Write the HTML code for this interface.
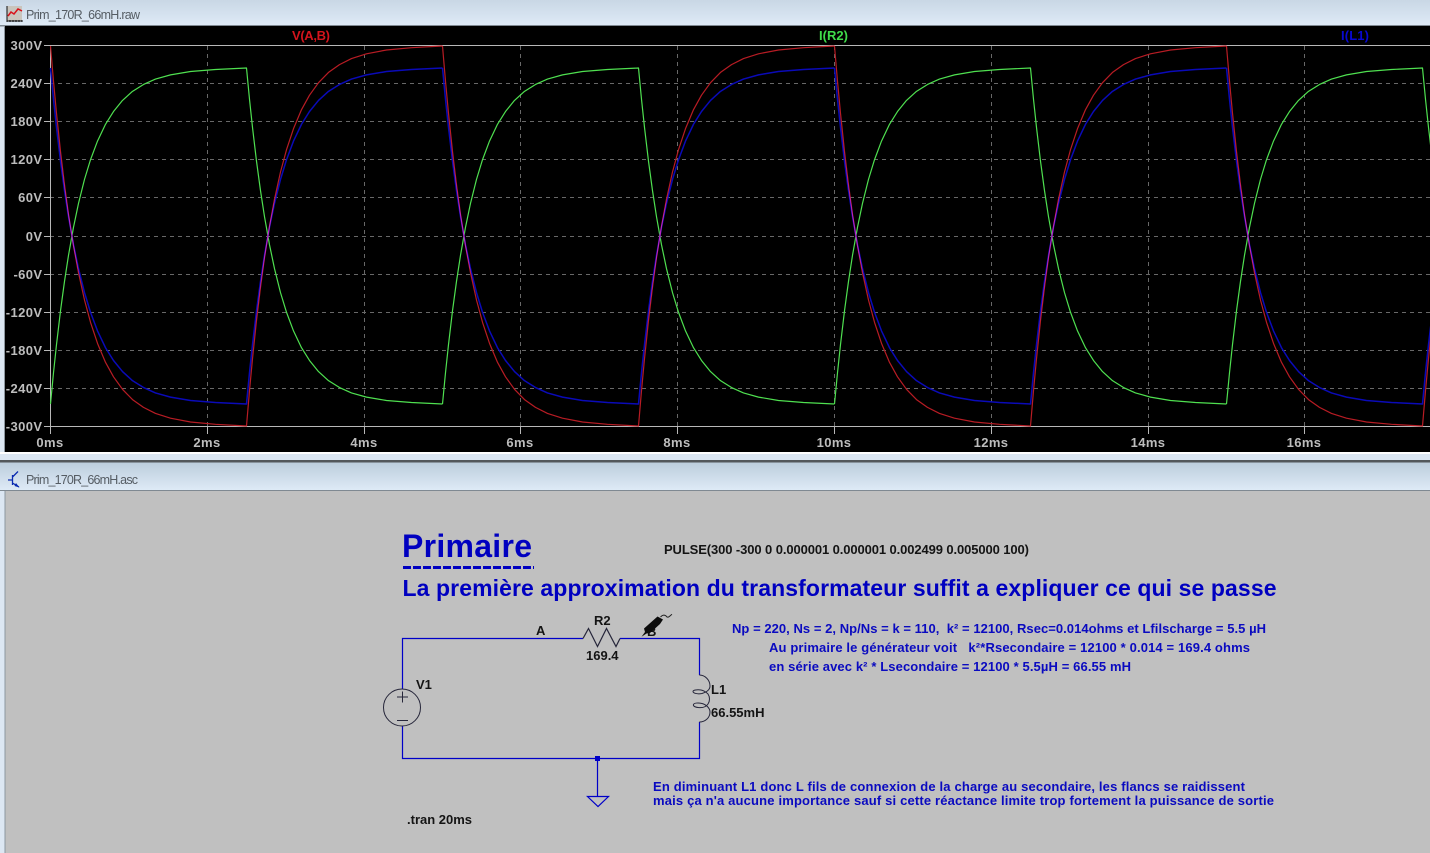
<!DOCTYPE html>
<html><head><meta charset="utf-8"><title>Prim_170R_66mH</title>
<style>
html,body{margin:0;padding:0;width:1430px;height:853px;overflow:hidden;background:#dce7f3}
svg{display:block}
text{font-family:"Liberation Sans",sans-serif;white-space:pre}
.ax{font-size:13px;font-weight:bold;fill:#bdbdbd;letter-spacing:.4px}
.b{font-size:13px;font-weight:bold;fill:#0a0ac0}
.k{font-size:13px;font-weight:bold;fill:#141414}
</style></head><body>
<svg width="1430" height="853" viewBox="0 0 1430 853" xmlns="http://www.w3.org/2000/svg">
<defs>
<linearGradient id="t1" x1="0" y1="0" x2="0" y2="1"><stop offset="0" stop-color="#c9d7e5"/><stop offset="1" stop-color="#deeaf6"/></linearGradient>
<linearGradient id="t2" x1="0" y1="0" x2="0" y2="1"><stop offset="0" stop-color="#bccddd"/><stop offset="1" stop-color="#deeaf6"/></linearGradient>
<polyline id="p" fill="none" vector-effect="non-scaling-stroke" points="0,1 3,.814 6,.646 10,.445 14,.27 18,.115 23,-.052 28,-.194 34,-.337 40,-.454 47,-.565 55,-.665 63,-.741 72,-.807 82,-.861 93,-.902 105,-.934 120,-.959 140,-.979 165,-.991 196,-1 199,-.814 202,-.646 206,-.445 210,-.27 214,-.115 219,.052 224,.194 230,.337 236,.454 243,.565 251,.665 259,.741 268,.807 278,.861 289,.902 301,.934 316,.959 336,.979 361,.991 392,1"/>
<g id="w"><use href="#p"/><use href="#p" x="392"/><use href="#p" x="784"/><use href="#p" x="1176"/></g>
<clipPath id="c"><rect x="5" y="26" width="1425" height="426"/></clipPath>
</defs>

<!-- window chrome -->
<rect width="1430" height="853" fill="#dce7f3"/>
<rect width="1430" height="25" fill="url(#t1)"/>
<rect x="0" y="25" width="1430" height="1.5" fill="#7f8992"/>
<rect x="4" y="26" width="1" height="426" fill="#8d97a0"/>
<rect x="5" y="26" width="1425" height="426" fill="#000"/>
<rect x="0" y="452" width="1430" height="2" fill="#fff"/>
<rect x="0" y="460" width="1430" height="2.500" fill="#53575c"/>
<rect x="0" y="462.500" width="1430" height="27.500" fill="url(#t2)"/>
<rect x="0" y="490" width="1430" height="1.500" fill="#7f8992"/>
<rect x="0" y="491" width="5" height="362" fill="#dce7f3"/>
<rect x="5" y="491" width="1425" height="362" fill="#c0c0c0"/>
<rect x="4.500" y="491" width="1" height="362" fill="#8d97a0"/>

<!-- title icons -->
<rect x="7" y="6" width="15" height="15" fill="#c9c5bd"/>
<path d="M7 6V21H22M7 20v2M10 20v2M13 20v2M16 20v2M19 20v2M22 20v2" fill="none" stroke="#111" stroke-width="1"/>
<path d="M8 16L11 12L14 14L18 9L22 11" fill="none" stroke="#d8131b" stroke-width="1.500"/>
<text x="26" y="19" font-size="12.500" fill="#555c63" textLength="114">Prim_170R_66mH.raw</text>
<path d="M12.500 475V485M8 480H12.500M12.500 477L18 471.500M12.500 483L19 487" fill="none" stroke="#0a2ab0" stroke-width="1.300"/>
<path d="M16 483L19.500 487.500L14.500 486Z" fill="#0a2ab0"/>
<text x="26" y="484" font-size="12.500" fill="#555c63" textLength="112">Prim_170R_66mH.asc</text>

<!-- plot grid -->
<g stroke="#686868" stroke-width="1" stroke-dasharray="4 4" fill="none">
<path d="M50 83.500H1430M50 121.500H1430M50 159.500H1430M50 197.500H1430M50 236.500H1430M50 274.500H1430M50 312.500H1430M50 350.500H1430M50 388.500H1430"/>
<path d="M207.500 46V426M364.500 46V426M520.500 46V426M677.500 46V426M834.500 46V426M991.500 46V426M1148.500 46V426M1304.500 46V426"/>
</g>
<g stroke="#b8b8b8" stroke-width="1" fill="none">
<path d="M50 45.500H1430M50 426.500H1430M50.500 45V434"/>
<path d="M44 45.500h6M44 83.500h6M44 121.500h6M44 159.500h6M44 197.500h6M44 236.500h6M44 274.500h6M44 312.500h6M44 350.500h6M44 388.500h6M44 426.500h6"/>
<path d="M207.500 426v8M364.500 426v8M520.500 426v8M677.500 426v8M834.500 426v8M991.500 426v8M1148.500 426v8M1304.500 426v8"/>
</g>

<!-- traces -->
<g clip-path="url(#c)" stroke-linejoin="round" fill="none">
<g transform="translate(50.500 236) scale(1 168)" stroke="#4fe050" stroke-width="1.200"><use href="#w"/></g>
<g transform="translate(50.500 236) scale(1 -168)" stroke="#0a0ab8" stroke-width="1.500"><use href="#w"/></g>
<g transform="translate(50.500 236) scale(1 -190)" stroke="#b81c24" stroke-width="1.200" style="mix-blend-mode:screen"><use href="#w"/></g>
</g>

<!-- plot labels -->
<text x="292" y="40" font-size="13" font-weight="bold" fill="#d4141c" textLength="38">V(A,B)</text>
<text x="819" y="40" font-size="13" font-weight="bold" fill="#3fdc4a" textLength="29">I(R2)</text>
<text x="1341" y="40" font-size="13" font-weight="bold" fill="#0808d0" textLength="28">I(L1)</text>
<g text-anchor="end">
<text class="ax" x="42.500" y="50">300V</text><text class="ax" x="42.500" y="88">240V</text><text class="ax" x="42.500" y="126">180V</text>
<text class="ax" x="42.500" y="164">120V</text><text class="ax" x="42.500" y="202">60V</text><text class="ax" x="42.500" y="241">0V</text>
<text class="ax" x="42.500" y="279">-60V</text><text class="ax" x="42.500" y="317">-120V</text><text class="ax" x="42.500" y="355">-180V</text>
<text class="ax" x="42.500" y="393">-240V</text><text class="ax" x="42.500" y="431">-300V</text>
</g>
<g text-anchor="middle">
<text class="ax" x="50" y="447">0ms</text><text class="ax" x="207" y="447">2ms</text><text class="ax" x="364" y="447">4ms</text>
<text class="ax" x="520" y="447">6ms</text><text class="ax" x="677" y="447">8ms</text><text class="ax" x="834" y="447">10ms</text>
<text class="ax" x="991" y="447">12ms</text><text class="ax" x="1148" y="447">14ms</text><text class="ax" x="1304" y="447">16ms</text>
</g>

<!-- schematic text -->
<text x="402" y="557" font-size="32" font-weight="bold" fill="#0000c0" textLength="130">Primaire</text>
<path d="M403 567.500H534" stroke="#0000c0" stroke-width="3" stroke-dasharray="8 2"/>
<text x="402.500" y="596" font-size="23" font-weight="bold" fill="#0000c0" textLength="874">La première approximation du transformateur suffit a expliquer ce qui se passe</text>
<text class="k" x="664" y="554" textLength="365">PULSE(300 -300 0 0.000001 0.000001 0.002499 0.005000 100)</text>
<text class="b" x="732" y="633" textLength="534">Np = 220, Ns = 2, Np/Ns = k = 110,  k² = 12100, Rsec=0.014ohms et Lfilscharge = 5.5 µH</text>
<text class="b" x="769" y="652" textLength="481">Au primaire le générateur voit   k²*Rsecondaire = 12100 * 0.014 = 169.4 ohms</text>
<text class="b" x="769" y="671" textLength="362">en série avec k² * Lsecondaire = 12100 * 5.5µH = 66.55 mH</text>
<text class="b" x="653" y="791" textLength="592">En diminuant L1 donc L fils de connexion de la charge au secondaire, les flancs se raidissent</text>
<text class="b" x="653" y="805" textLength="621">mais ça n'a aucune importance sauf si cette réactance limite trop fortement la puissance de sortie</text>
<text class="k" x="536" y="635">A</text>
<text class="k" x="594" y="625">R2</text>
<text class="k" x="586" y="660">169.4</text>
<text class="k" x="416" y="689">V1</text>
<text class="k" x="711" y="694">L1</text>
<text class="k" x="711" y="717">66.55mH</text>
<text class="k" x="407" y="824">.tran 20ms</text>
<text class="k" x="647" y="636">B</text>

<!-- wires -->
<path d="M402.500 689V638.500H583M620 638.500H699.500V675M699.500 722V758.500H402.500V726M597.500 758V797" fill="none" stroke="#0000c8" stroke-width="1.200"/>
<rect x="595" y="756" width="5" height="5" fill="#0000c8"/>
<path d="M587.500 796.500H608.500L598 806.500Z" fill="none" stroke="#0000c8" stroke-width="1.200"/>

<!-- components -->
<path d="M583 638.500L588.500 628.500L597.500 646.500L606.500 628.500L616 646.500L620 638.500" fill="none" stroke="#26263a" stroke-width="1.200"/>
<circle cx="402" cy="707.500" r="18.500" fill="none" stroke="#26263a" stroke-width="1"/>
<path d="M397 697H408M402.500 691.500V702.500M397 720.500H408" stroke="#26263a" stroke-width="1" fill="none"/>
<path d="M699.300 675C705 675 710 680 710 686C710 690 707 692 702 693.500C697 694.500 693 693 693 691.500C693 690 697 689.500 701 690C704 690.500 706 692 708 694C710 697 710 701 708 704C706 707 702 708 698 707.500C694 707 693 705.500 693.500 704.500C694 703 698 702.500 702 703.500C706 704.500 710 708 710 712C710 718 705 722 699.300 722" fill="none" stroke="#26263a" stroke-width="1"/>
<path d="M641.500 636.800L645 632L644 628.500L657.500 616.500L663 619.500L660 624L650 633L646.500 633.500Z" fill="#0c0c0c"/>
<path d="M660.500 617C663 614.500 665 614.500 667 617C669 618 670 615.500 672 614.300" fill="none" stroke="#222" stroke-width="1"/>
</svg>
</body></html>
